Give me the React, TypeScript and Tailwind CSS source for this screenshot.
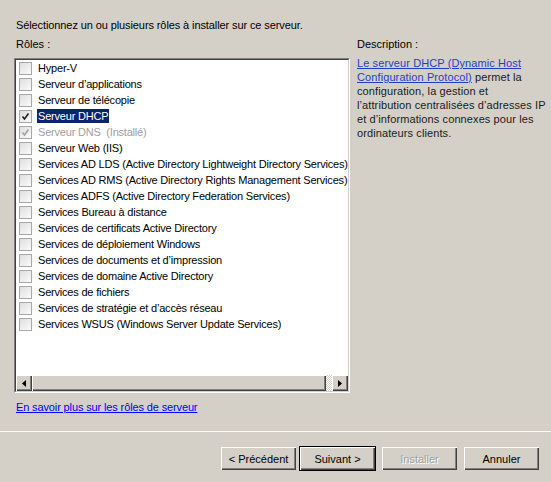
import React from "react";

const items: { label: string; state?: "checked" | "disabled" | "selected" }[] = [
  { label: "Hyper-V" },
  { label: "Serveur d’applications" },
  { label: "Serveur de télécopie" },
  { label: "Serveur DHCP", state: "selected" },
  { label: "Serveur DNS  (Installé)", state: "disabled" },
  { label: "Serveur Web (IIS)" },
  { label: "Services AD LDS (Active Directory Lightweight Directory Services)" },
  { label: "Services AD RMS (Active Directory Rights Management Services)" },
  { label: "Services ADFS (Active Directory Federation Services)" },
  { label: "Services Bureau à distance" },
  { label: "Services de certificats Active Directory" },
  { label: "Services de déploiement Windows" },
  { label: "Services de documents et d’impression" },
  { label: "Services de domaine Active Directory" },
  { label: "Services de fichiers" },
  { label: "Services de stratégie et d’accès réseau" },
  { label: "Services WSUS (Windows Server Update Services)" },
];

function Check({ color }: { color: string }) {
  return (
    <svg width="11" height="11" viewBox="0 0 11 11" className="block">
      <path d="M2.5 5.5 L4.5 8 L8.5 2.5" fill="none" stroke={color} strokeWidth="1.6" />
    </svg>
  );
}

function Checkbox({ checked, disabled }: { checked?: boolean; disabled?: boolean }) {
  return (
    <div className="w-[13px] h-[13px] shrink-0 border border-[#a8a8a8] bg-linear-to-br from-[#dedede] to-[#fbfbfb] flex items-center justify-center">
      {checked && <Check color={disabled ? "#a0a0a0" : "#202020"} />}
    </div>
  );
}

function Raised({ className, children }: { className?: string; children?: React.ReactNode }) {
  return (
    <div className={"bg-[#d4d0c8] shadow-[inset_1px_1px_0_#ffffff,inset_-1px_-1px_0_#404040,inset_-2px_-2px_0_#808080] " + (className ?? "")}>
      {children}
    </div>
  );
}

function Button({ label, disabled, def }: { label: string; disabled?: boolean; def?: boolean }) {
  const inner = (
    <div
      className={
        "h-[23px] w-[75px] flex items-center justify-center bg-[#d4d0c8] shadow-[inset_1px_1px_0_#ffffff,inset_-1px_-1px_0_#404040,inset_-2px_-2px_0_#808080] " +
        (disabled ? "text-[#a0a0a0] [text-shadow:1px_1px_0_#ffffff]" : "text-black")
      }
    >
      {label}
    </div>
  );
  if (def) {
    return <div className="border border-black">{inner}</div>;
  }
  return inner;
}

export default function App() {
  return (
    <div
      className="w-[551px] h-[482px] bg-[#d4d0c8] text-black text-[11px] leading-[14px] overflow-hidden flex flex-col"
      style={{ fontFamily: '"Liberation Sans", Arial, sans-serif' }}
    >
      <div className="flex pl-[14px] pt-[18px]">
        <div className="w-[336px] flex flex-col">
          <div className="pl-[2px] h-[14px] tracking-[-0.1px]">Sélectionnez un ou plusieurs rôles à installer sur ce serveur.</div>
          <div className="pl-[2px] mt-[5px] h-[14px]">Rôles :</div>
          <div className="mt-[7px] h-[335px] border border-t-[#808080] border-l-[#808080] border-b-white border-r-white">
            <div className="h-full border border-t-[#404040] border-l-[#404040] border-b-[#d4d0c8] border-r-[#d4d0c8] bg-white flex flex-col">
              <div className="flex-1 overflow-hidden pt-0">
                {items.map((it, i) => (
                  <div key={i} className="h-[16px] flex items-center pl-[3px] whitespace-pre">
                    <Checkbox checked={it.state === "selected" || it.state === "disabled"} disabled={it.state === "disabled"} />
                    <span
                      className={
                        "ml-[5px] px-[1px] h-[14px] leading-[14px] tracking-[-0.2px] " +
                        (it.state === "selected"
                          ? "bg-[#0a246a] text-white"
                          : it.state === "disabled"
                          ? "text-[#a0a0a0]"
                          : "text-black")
                      }
                    >
                      {it.label}
                    </span>
                  </div>
                ))}
              </div>
              <div className="h-[16px] flex bg-[#d4d0c8]">
                <Raised className="w-[16px] h-[16px] flex items-center justify-center">
                  <svg width="4" height="7" viewBox="0 0 4 7" className="block -ml-[1px]">
                    <path d="M4 0 L0 3.5 L4 7 Z" fill="black" />
                  </svg>
                </Raised>
                <Raised className="w-[294px] h-[16px]" />
                <div className="flex-1 h-[16px] bg-[repeating-conic-gradient(#d4d0c8_0_25%,#ffffff_0_50%)] bg-[length:2px_2px]" />
                <Raised className="w-[16px] h-[16px] flex items-center justify-center">
                  <svg width="4" height="7" viewBox="0 0 4 7" className="block">
                    <path d="M0 0 L4 3.5 L0 7 Z" fill="black" />
                  </svg>
                </Raised>
              </div>
            </div>
          </div>
          <div className="mt-[7px] pl-[2px] h-[14px] tracking-[-0.13px]">
            <span className="text-[#0000ff] underline">En savoir plus sur les rôles de serveur</span>
          </div>
        </div>
        <div className="ml-[7px] w-[192px] flex flex-col pt-[19px]">
          <div className="h-[14px]">Description :</div>
          <div className="mt-[5px] leading-[14px] text-[#1a1a1a] whitespace-nowrap tracking-[0.1px]">
            <span className="text-[#1f3fc8] underline">Le serveur DHCP (Dynamic Host</span>
            <br />
            <span className="text-[#1f3fc8] underline">Configuration Protocol)</span> permet la
            <br />
            configuration, la gestion et
            <br />
            l’attribution centralisées d’adresses IP
            <br />
            et d’informations connexes pour les
            <br />
            ordinateurs clients.
          </div>
        </div>
      </div>
      <div className="mt-[17px] h-[1px] bg-white" />
      <div className="mt-[15px] flex pl-[221px]">
        <Button label="< Précédent" />
        <div className="ml-[3px] -mt-[1px]">
          <Button label="Suivant >" def />
        </div>
        <div className="ml-[6px]">
          <Button label="Installer" disabled />
        </div>
        <div className="ml-[7px]">
          <Button label="Annuler" />
        </div>
      </div>
    </div>
  );
}
